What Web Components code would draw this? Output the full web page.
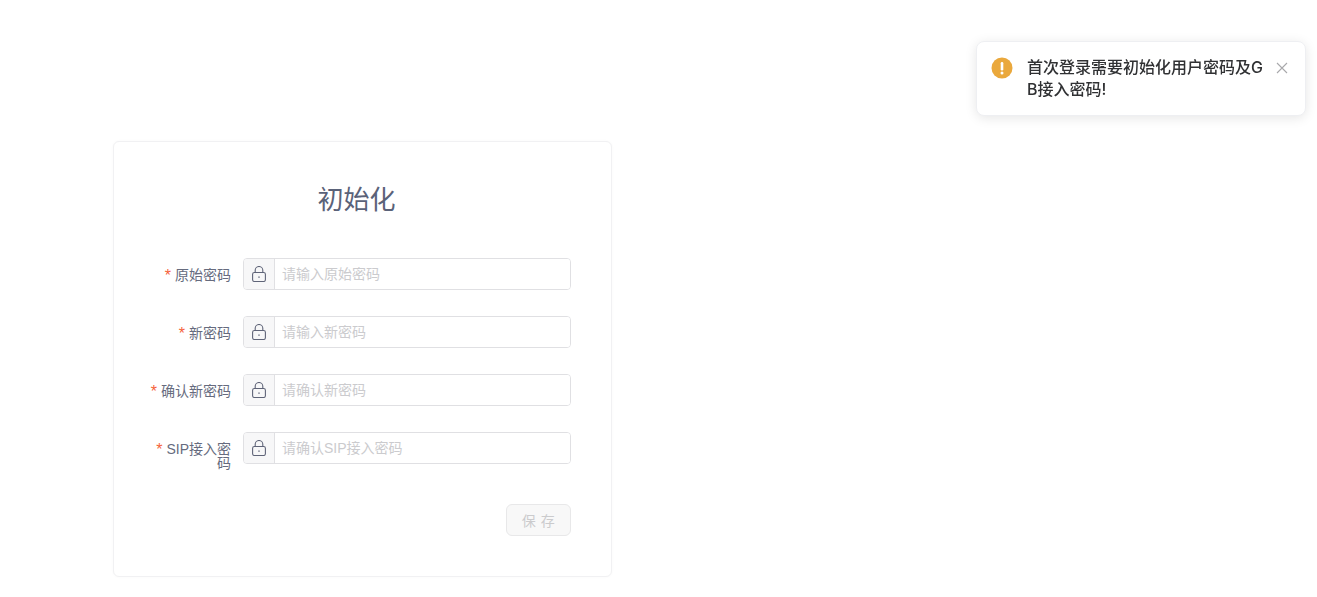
<!DOCTYPE html>
<html lang="zh">
<head>
<meta charset="utf-8">
<title>初始化</title>
<style>
    html, body { margin: 0; height: 100%; background: #fff; overflow: hidden; }
    body { font-family: "Liberation Sans", "Noto Sans CJK SC", sans-serif; }
</style>
</head>
<body>
<init-page>
    <init-card heading="初始化">
        <form-row label="原始密码" placeholder="请输入原始密码"></form-row>
        <form-row label="新密码" placeholder="请输入新密码"></form-row>
        <form-row label="确认新密码" placeholder="请确认新密码"></form-row>
        <form-row label="SIP接入密码" placeholder="请确认SIP接入密码"></form-row>
        <save-button>保 存</save-button>
    </init-card>
</init-page>
<warn-notice>首次登录需要初始化用户密码及GB接入密码!</warn-notice>

<script>
class InitPage extends HTMLElement {
    constructor() {
        super();
        this.attachShadow({ mode: "open" });
        this.shadowRoot.innerHTML = `
            <style>
                :host { display: block; box-sizing: border-box; height: 100%; padding: 141px 0 0 113px; }
            </style>
            <slot></slot>`;
    }
}

class InitCard extends HTMLElement {
    constructor() {
        super();
        this.attachShadow({ mode: "open" });
        this.shadowRoot.innerHTML = `
            <style>
                :host {
                    display: block;
                    box-sizing: border-box;
                    width: 499px;
                    height: 436px;
                    padding: 40px 40px 40px 32px;
                    background: #fff;
                    border: 1px solid #f1f1f3;
                    border-radius: 6px;
                    box-shadow: 0 0 3px rgba(0, 0, 0, 0.03);
                }
                h1 {
                    margin: 0 0 42px;
                    padding-right: 4px;
                    height: 34px;
                    line-height: 36px;
                    font-size: 26px;
                    font-weight: 400;
                    text-align: center;
                    color: #5a6279;
                }
                .rows { display: grid; row-gap: 26px; }
            </style>
            <h1></h1>
            <div class="rows"><slot></slot></div>`;
        this.shadowRoot.querySelector("h1").textContent = this.getAttribute("heading");
    }
}

class FormRow extends HTMLElement {
    constructor() {
        super();
        this.attachShadow({ mode: "open" });
        this.shadowRoot.innerHTML = `
            <style>
                :host { display: grid; grid-template-columns: 97px 1fr; height: 32px; }
                label {
                    padding-right: 12px;
                    padding-top: 10px;
                    font-size: 14px;
                    line-height: 14px;
                    text-align: right;
                    color: #666b7e;
                }
                label::before {
                    content: "*";
                    color: #f5633a;
                    margin-right: 4px;
                    font-size: 16px;
                    line-height: 0;
                    vertical-align: -1px;
                }
                .box {
                    display: flex;
                    box-sizing: border-box;
                    height: 32px;
                    border: 1px solid #e0e0e3;
                    border-radius: 4px;
                    overflow: hidden;
                }
                .icon {
                    flex: none;
                    display: flex;
                    align-items: center;
                    justify-content: center;
                    width: 30px;
                    background: #f7f7f8;
                    border-right: 1px solid #e0e0e3;
                }
                input {
                    flex: 1;
                    min-width: 0;
                    border: 0;
                    outline: 0;
                    padding: 0 7px;
                    font: inherit;
                    font-size: 14px;
                    color: #606266;
                    background: #fff;
                }
                input::placeholder { color: #cbcbce; opacity: 1; }
            </style>
            <label></label>
            <div class="box">
                <span class="icon">
                    <svg width="14" height="16" viewBox="0 0 14 16" fill="none" stroke="#5f6478" stroke-width="1.1">
                        <rect x="0.6" y="6.5" width="12.8" height="9" rx="1.8"/>
                        <path d="M3.2 6.5V4.3a3.8 3.8 0 0 1 7.6 0V6.5"/>
                        <path d="M7 10.4v1.3" stroke-width="1.4"/>
                    </svg>
                </span>
                <input type="password">
            </div>`;
        this.shadowRoot.querySelector("label").textContent = this.getAttribute("label");
        this.shadowRoot.querySelector("input").placeholder = this.getAttribute("placeholder");
    }
}

class SaveButton extends HTMLElement {
    constructor() {
        super();
        this.attachShadow({ mode: "open" });
        this.shadowRoot.innerHTML = `
            <style>
                :host { display: flex; justify-content: flex-end; margin-top: 14px; }
                button {
                    box-sizing: border-box;
                    width: 65px;
                    height: 32px;
                    padding: 0;
                    font: inherit;
                    font-size: 14px;
                    letter-spacing: 0.6px;
                    color: #cbcbcd;
                    white-space: pre;
                    background: #f8f8f8;
                    border: 1px solid #e8e8e9;
                    border-radius: 6px;
                }
            </style>
            <button disabled><slot></slot></button>`;
    }
}

class WarnNotice extends HTMLElement {
    constructor() {
        super();
        this.attachShadow({ mode: "open" });
        this.shadowRoot.innerHTML = `
            <style>
                :host {
                    position: fixed;
                    top: 41px;
                    right: 11px;
                    box-sizing: border-box;
                    display: flex;
                    align-items: flex-start;
                    width: 330px;
                    height: 75px;
                    padding: 14px 17px 14px 14px;
                    background: #fff;
                    border: 1px solid #eeeff2;
                    border-radius: 8px;
                    box-shadow: 0 2px 12px rgba(0, 0, 0, 0.1);
                    font-family: Inter, "Noto Sans CJK SC", sans-serif;
                }
                .mark { flex: none; width: 22px; height: 22px; margin: 1px 14px 0 0; }
                .text {
                    flex: 1;
                    min-width: 0;
                    font-size: 16px;
                    line-height: 22px;
                    font-weight: 500;
                    color: #303133;
                    word-break: break-all;
                }
                .close { flex: none; width: 12px; height: 12px; margin: 6px 0 0 11px; }
            </style>
            <svg class="mark" viewBox="0 0 22 22">
                <circle cx="11" cy="11" r="10.5" fill="#eaa83c"/>
                <rect x="9.7" y="5" width="2.6" height="8.4" rx="1.2" fill="#fff"/>
                <circle cx="11" cy="16" r="1.5" fill="#fff"/>
            </svg>
            <div class="text"><slot></slot></div>
            <svg class="close" viewBox="0 0 12 12" fill="none" stroke="#a8a8ab" stroke-width="1.1">
                <path d="M1 1l10 10M11 1L1 11"/>
            </svg>`;
    }
}

customElements.define("init-page", InitPage);
customElements.define("init-card", InitCard);
customElements.define("form-row", FormRow);
customElements.define("save-button", SaveButton);
customElements.define("warn-notice", WarnNotice);
</script>
</body>
</html>
